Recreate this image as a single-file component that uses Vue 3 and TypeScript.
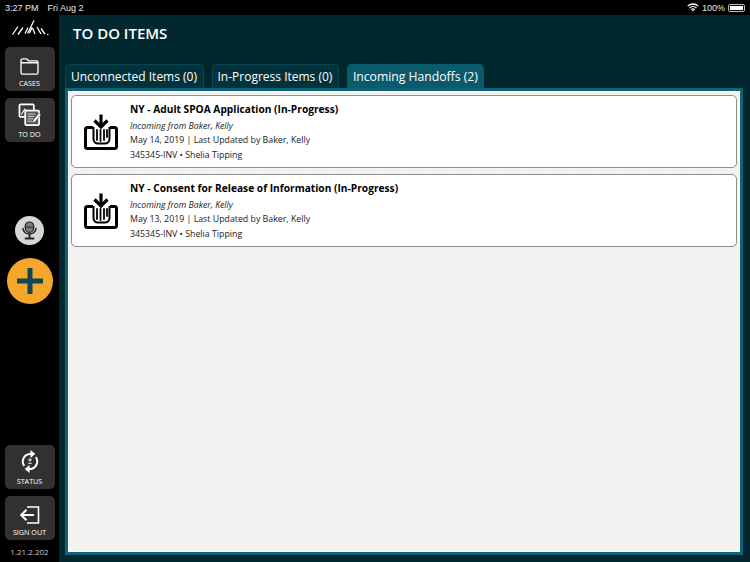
<template>
  <div class="screen">
    <!-- Status bar -->
    <header class="status-bar">
      <div class="status-left">
        <span>3:27 PM</span>
        <span>Fri Aug 2</span>
      </div>
      <div class="status-right">
        <svg class="wifi" viewBox="0 0 16 12" width="12" height="9">
          <path d="M1 4.200a10 10 0 0 1 14 0M3.400 6.600a6.600 6.600 0 0 1 9.200 0M5.700 8.900a3.300 3.300 0 0 1 4.600 0" fill="none" stroke="#fff" stroke-width="1.700" />
          <path d="M6.700 10 8 11.600 9.300 10a1.800 1.800 0 0 0-2.600 0z" fill="#fff" />
        </svg>
        <span>100%</span>
        <span class="battery"><span class="battery-fill"></span></span>
      </div>
    </header>

    <div class="body">
      <!-- Sidebar -->
      <aside class="sidebar">
        <svg class="logo" viewBox="0 0 38 16" width="38" height="16">
          <path d="M1.500 14.500 7 6.500M7 14.500 12 7.500M14 13.500 17 7.500M16.500 13.500 23 .5M21 7.500 18.500 13M24 14 21.500 8M26 7 30 14M30 8.500 34 14" fill="none" stroke="#fff" stroke-width="1.300" />
          <circle cx="36.800" cy="14.500" r="0.800" fill="#fff" />
        </svg>

        <button class="nav-btn">
          <svg viewBox="0 0 20 18" width="19" height="17">
            <path d="M1 5V2.800C1 1.800 1.700 1 2.700 1h4c.6 0 1 .3 1.300.8L8.700 3H17.300C18.300 3 19 3.800 19 4.800V15c0 1-.7 2-1.700 2H2.700C1.700 17 1 16 1 15ZM1 5h18" fill="none" stroke="#fff" stroke-width="1.400" />
          </svg>
          <span>CASES</span>
        </button>

        <button class="nav-btn">
          <svg viewBox="0 0 24 24" width="24" height="24">
            <rect x="1" y="1.500" width="15" height="13" rx="1" fill="#3c3a38" stroke="#fff" stroke-width="1.800" />
            <path d="M3 12l3.500-5.500 2.500 3 2-2 3 4" fill="none" stroke="#fff" stroke-width="1.200" />
            <rect x="7" y="8" width="14.500" height="15" rx="1" fill="#5a5856" stroke="#fff" stroke-width="1.800" />
            <path d="M9.500 11.500h8M9.500 14h7M9.500 16.500h6M9.500 19h5" stroke="#d8d8d8" stroke-width="1" />
            <path d="M14.500 21l1-3.500 6-7 2 1.800-6 7z" fill="#fff" stroke="#333130" stroke-width="0.500" />
          </svg>
          <span>TO DO</span>
        </button>

        <button class="mic-btn">
          <svg viewBox="0 0 18 20" width="17" height="19">
            <rect x="4.500" y="1" width="9" height="11" rx="4.500" fill="#7c7c7c" stroke="#222" stroke-width="1.300" />
            <path d="M4.500 6.500h9" stroke="#222" stroke-width="1" />
            <path d="M2 7c0 9 14 9 14 0" fill="none" stroke="#222" stroke-width="1.500" />
            <path d="M9 14v3.500M4 18.500h10" stroke="#222" stroke-width="2" fill="none" />
          </svg>
        </button>

        <button class="add-btn">
          <svg viewBox="0 0 26 26" width="26" height="26">
            <path d="M13 0v26M0 13h26" stroke="#0e4753" stroke-width="5" />
          </svg>
        </button>

        <div class="sidebar-spacer"></div>

        <button class="nav-btn">
          <svg viewBox="0 0 20 26" width="18" height="24">
            <path d="M3.500 18A8.500 8.500 0 0 1 10 4.500h2M16.500 8A8.500 8.500 0 0 1 10 21.500H8" fill="none" stroke="#fff" stroke-width="2.200" />
            <path d="M10.500 0 16 4.500l-5.500 4.500zM9.500 17 4 21.500 9.500 26z" fill="#fff" />
            <path d="M10 9.500v3.500M8 11.250h4M8 15h4" stroke="#fff" stroke-width="1.100" />
          </svg>
          <span>STATUS</span>
        </button>

        <button class="nav-btn">
          <svg viewBox="0 0 20 18" width="20" height="18">
            <path d="M7 1h11.500v16H7" fill="none" stroke="#fff" stroke-width="1.600" />
            <path d="M14 9H3" stroke="#fff" stroke-width="2" />
            <path d="M6.500 3.800 1.200 9l5.300 5.200" fill="none" stroke="#fff" stroke-width="2" />
          </svg>
          <span>SIGN OUT</span>
        </button>

        <div class="version">1.21.2.202</div>
      </aside>

      <!-- Main content -->
      <main class="main">
        <h1 class="title">TO DO ITEMS</h1>

        <nav class="tabs">
          <button
            v-for="tab in tabs"
            :key="tab.label"
            class="tab"
            :class="{ active: tab.active }"
          >
            {{ tab.label }} ({{ tab.count }})
          </button>
        </nav>

        <section class="panel">
          <article v-for="item in items" :key="item.title" class="card">
            <svg class="card-icon" viewBox="0 0 34 36" width="34" height="36">
              <path d="M9 13.500H3.500C2.300 13.500 1.500 14.300 1.500 15.500V32.500C1.500 33.700 2.300 34.500 3.500 34.500H30.500C31.700 34.500 32.500 33.700 32.500 32.500V15.500C32.500 14.300 31.700 13.500 30.500 13.500H26" fill="none" stroke="#000" stroke-width="3" stroke-linejoin="round" />
              <path d="M9.500 13V25C9.500 27.500 11.500 29.500 14 29.500H20.500C23.500 29.500 25.500 27.500 25.500 25V13" fill="none" stroke="#000" stroke-width="2" />
              <path d="M13 16V26M16.500 16V27M20 16V26M23 16V23" stroke="#000" stroke-width="1.800" stroke-linecap="round" />
              <path d="M17 0.500V11" stroke="#000" stroke-width="3.200" />
              <path d="M10.500 6.500 17 13 23.500 6.500" fill="none" stroke="#000" stroke-width="3.200" />
            </svg>
            <div class="card-text">
              <h2>{{ item.title }}</h2>
              <p class="incoming">{{ item.incoming }}</p>
              <p>{{ item.updated }}</p>
              <p>{{ item.client }}</p>
            </div>
          </article>
        </section>
      </main>
    </div>
  </div>
</template>

<script setup lang="ts">
const tabs = [
  { label: "Unconnected Items", count: 0, active: false },
  { label: "In-Progress Items", count: 0, active: false },
  { label: "Incoming Handoffs", count: 2, active: true },
];

const items = [
  {
    title: "NY - Adult SPOA Application (In-Progress)",
    incoming: "Incoming from Baker, Kelly",
    updated: "May 14, 2019 | Last Updated by Baker, Kelly",
    client: "345345-INV • Shelia Tipping",
  },
  {
    title: "NY - Consent for Release of Information (In-Progress)",
    incoming: "Incoming from Baker, Kelly",
    updated: "May 13, 2019 | Last Updated by Baker, Kelly",
    client: "345345-INV • Shelia Tipping",
  },
];
</script>

<style scoped>
.screen {
  width: 750px;
  height: 562px;
  display: flex;
  flex-direction: column;
  overflow: hidden;
  background: #000;
  font-family: "Open Sans", sans-serif;
}

.status-bar {
  height: 15px;
  flex: none;
  display: flex;
  align-items: center;
  justify-content: space-between;
  padding: 0 5px;
  color: #e8e8e8;
  font-size: 9px;
  font-family: "Liberation Sans", sans-serif;
}

.status-left {
  display: flex;
  gap: 9px;
}

.status-right {
  display: flex;
  align-items: center;
  gap: 3px;
}

.battery {
  width: 17px;
  height: 8px;
  border: 1px solid #bbb;
  border-radius: 2px;
  padding: 1px;
  box-sizing: border-box;
  display: flex;
}

.battery-fill {
  flex: 1;
  background: #fff;
}

.body {
  flex: 1;
  display: flex;
  min-height: 0;
}

.sidebar {
  width: 59px;
  flex: none;
  display: flex;
  flex-direction: column;
  align-items: center;
  box-sizing: border-box;
  padding-top: 5px;
}

.logo {
  margin-bottom: 11px;
  margin-left: 1px;
}

.nav-btn {
  width: 50px;
  height: 44px;
  margin-bottom: 7px;
  border: none;
  border-radius: 5px;
  background: #333130;
  color: #fff;
  padding: 5px 0 3px;
  display: flex;
  flex-direction: column;
  align-items: center;
  justify-content: flex-end;
  font-family: "Open Sans", sans-serif;
  font-size: 7.200px;
  font-weight: 500;
  gap: 3px;
}

.mic-btn {
  width: 29px;
  height: 29px;
  margin-top: 67px;
  border: none;
  border-radius: 50%;
  background: #d6d6d6;
  padding: 0;
  display: flex;
  align-items: center;
  justify-content: center;
}

.add-btn {
  width: 46px;
  height: 46px;
  margin-top: 13px;
  border: none;
  border-radius: 50%;
  background: #f5a72c;
  padding: 0;
  display: flex;
  align-items: center;
  justify-content: center;
}

.sidebar-spacer {
  flex: 1;
}

.version {
  color: #c8c8c8;
  font-size: 8px;
  margin-bottom: 5px;
  margin-top: -1px;
}

.main {
  flex: 1;
  min-width: 0;
  background: #02282f;
  display: flex;
  flex-direction: column;
  padding: 0 7px 7px 6px;
  box-sizing: border-box;
}

.title {
  margin: 8px 0 0 8px;
  height: 41px;
  color: #fff;
  font-size: 15px;
  line-height: 20px;
  font-weight: 600;
}

.tabs {
  display: flex;
  gap: 7.500px;
  height: 24px;
  flex: none;
}

.tab {
  border: 1px solid #0c4450;
  border-bottom: none;
  border-radius: 5px 5px 0 0;
  background: #02323b;
  color: #fff;
  font-family: "Open Sans", sans-serif;
  font-size: 12px;
  padding: 0 6px 0 5px;
  white-space: nowrap;
}

.tab.active {
  background: #0a5a6c;
  border-color: #0a5a6c;
  font-size: 12.200px;
  padding: 0 5px;
}

.panel {
  flex: 1;
  border: 3px solid #0f6376;
  outline: 1px solid #fff;
  outline-offset: -4px;
  box-sizing: border-box;
  padding: 4px 3px;
  display: flex;
  flex-direction: column;
  gap: 6px;
  background-color: #f3f3f1;
  background-image: radial-gradient(#ebebe9 0.7px, transparent 0.8px);
  background-size: 3px 3px;
}

.card {
  height: 73px;
  flex: none;
  box-sizing: border-box;
  border: 1px solid #8d8d8b;
  border-radius: 5px;
  background: #fff;
  display: flex;
  align-items: center;
}

.card-icon {
  margin-left: 12px;
  flex: none;
}

.card-text {
  margin-left: 12px;
  padding-top: 2px;
  color: #222;
  font-size: 8.800px;
}

.card-text h2 {
  margin: 0 0 4px;
  font-size: 10.200px;
  line-height: 14px;
  font-weight: 700;
  color: #000;
}

.card-text p {
  margin: 0 0 2px;
  line-height: 13px;
}

.card-text .incoming {
  font-style: italic;
  font-size: 8.700px;
  margin-bottom: 1px;
}
</style>

<style>
html,
body {
  margin: 0;
  background: #000;
}
</style>
